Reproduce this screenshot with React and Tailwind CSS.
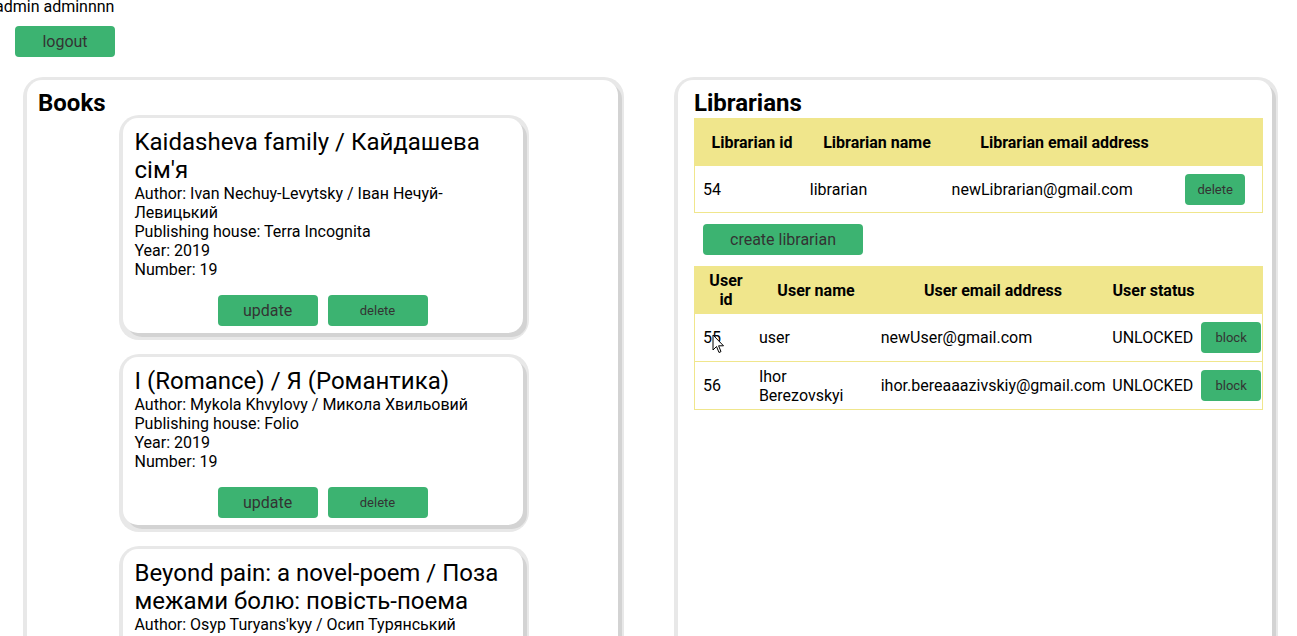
import React from "react";

const GREEN = "bg-[#3cb371]";

function Btn({ children, className = "" }) {
  return (
    <button
      className={`${GREEN} rounded-[4px] text-[#333] flex items-center justify-center ${className}`}
    >
      {children}
    </button>
  );
}

const books = [
  {
    title: "Kaidasheva family / Кайдашева сім'я",
    author: "Ivan Nechuy-Levytsky / Іван Нечуй-Левицький",
    house: "Terra Incognita",
  },
  {
    title: "I (Romance) / Я (Романтика)",
    author: "Mykola Khvylovy / Микола Хвильовий",
    house: "Folio",
  },
  {
    title: "Beyond pain: a novel-poem / Поза межами болю: повість-поема",
    author: "Osyp Turyans'kyy / Осип Турянський",
    house: "Folio",
  },
];

function BookCard({ b }) {
  return (
    <div className="w-[400px] shrink-0 bg-white rounded-[15px] pt-[10px] px-3 pb-[7px] shadow-[4px_4px_0_0_#d3d3d3,1px_2px_0_5px_#e8e8e8]">
      <div className="text-[24px] leading-[28px]">{b.title}</div>
      <div className="text-[16px] leading-[19px]">
        <div>Author: {b.author}</div>
        <div>Publishing house: {b.house}</div>
        <div>Year: 2019</div>
        <div>Number: 19</div>
      </div>
      <div className="mt-[16px] flex justify-center gap-[10px]">
        <Btn className="w-[100px] h-[31px] text-[16px]">update</Btn>
        <Btn className="w-[100px] h-[31px] text-[13px]">delete</Btn>
      </div>
    </div>
  );
}

const panel =
  "bg-white rounded-[15px] shadow-[4px_4px_0_0_#d3d3d3,1px_2px_0_5px_#e8e8e8] pt-[9px]";

export default function App() {
  return (
    <div className="relative h-[636px] overflow-hidden bg-white text-black font-['Roboto',_'Liberation_Sans',_sans-serif] leading-[normal] text-[16px]">
      <div className="-mt-[3px] -ml-[5px]">admin adminnnn</div>
      <Btn className="ml-[15px] mt-[10px] w-[100px] h-[31px] text-[16px]">logout</Btn>

      <div className="mt-[23px] pl-[27px] flex items-stretch gap-[60px]">
        {/* Books panel */}
        <div className={`${panel} w-[591px] h-[800px] pl-[11px]`}>
          <h2 className="text-[24px] font-bold leading-[28px]">Books</h2>
          <div className="mt-[1px] -ml-[11px] flex flex-col items-center gap-[24px]">
            {books.map((b, i) => (
              <BookCard key={i} b={b} />
            ))}
          </div>
        </div>

        {/* Librarians panel */}
        <div className={`${panel} w-[594px] h-[800px] pl-[16px]`}>
          <h2 className="text-[24px] font-bold leading-[28px]">Librarians</h2>
          <div className="mt-[1px] w-[569px]">
            <div className="flex h-[48px] items-center bg-[#f0e68c] font-bold text-center">
              <div className="w-[116px]">Librarian id</div>
              <div className="w-[134px]">Librarian name</div>
              <div className="w-[241px]">Librarian email address</div>
              <div className="w-[78px]"></div>
            </div>
            <div className="flex h-[47px] items-center border-x border-b border-[#f0e68c]">
              <div className="w-[115px] pl-[8px]">54</div>
              <div className="w-[134px]">librarian</div>
              <div className="w-[241px] pl-[8px]">newLibrarian@gmail.com</div>
              <div className="w-[78px] pl-[1px]">
                <Btn className="w-[60px] h-[31px] text-[13px]">delete</Btn>
              </div>
            </div>
          </div>

          <Btn className="ml-[9px] mt-[11px] w-[160px] h-[31px] text-[16px]">create librarian</Btn>

          <div className="mt-[11px] w-[569px]">
            <div className="flex h-[48px] items-center bg-[#f0e68c] font-bold text-center">
              <div className="w-[64px] px-[9px]">User id</div>
              <div className="w-[116px]">User name</div>
              <div className="w-[238px]">User email address</div>
              <div className="w-[83px]">User status</div>
              <div className="w-[68px]"></div>
            </div>
            {[
              ["55", "user", "newUser@gmail.com"],
              ["56", "Ihor Berezovskyi", "ihor.bereaaazivskiy@gmail.com"],
            ].map(([id, name, email]) => (
              <div
                key={id}
                className="flex h-[48px] items-center border-x border-b border-[#f0e68c]"
              >
                <div className="w-[63px] pl-[8px]">{id}</div>
                <div className="w-[116px] pl-[1px] pr-[20px]">{name}</div>
                <div className="w-[238px] pl-[7px] whitespace-nowrap">{email}</div>
                <div className="w-[83px] pl-[1px]">UNLOCKED</div>
                <div className="w-[68px] pl-[7px]">
                  <Btn className="w-[60px] h-[31px] text-[13px]">block</Btn>
                </div>
              </div>
            ))}
          </div>
        </div>
      </div>

      {/* mouse cursor */}
      <svg
        className="absolute left-[712px] top-[334px]"
        width="13"
        height="21"
        viewBox="0 0 13 21"
      >
        <path
          d="M1 1 L1 16 L4.5 12.5 L7 18.5 L9 17.6 L6.6 11.8 L11.5 11.8 Z"
          fill="white"
          stroke="black"
          strokeWidth="1"
          strokeLinejoin="miter"
        />
      </svg>
    </div>
  );
}
